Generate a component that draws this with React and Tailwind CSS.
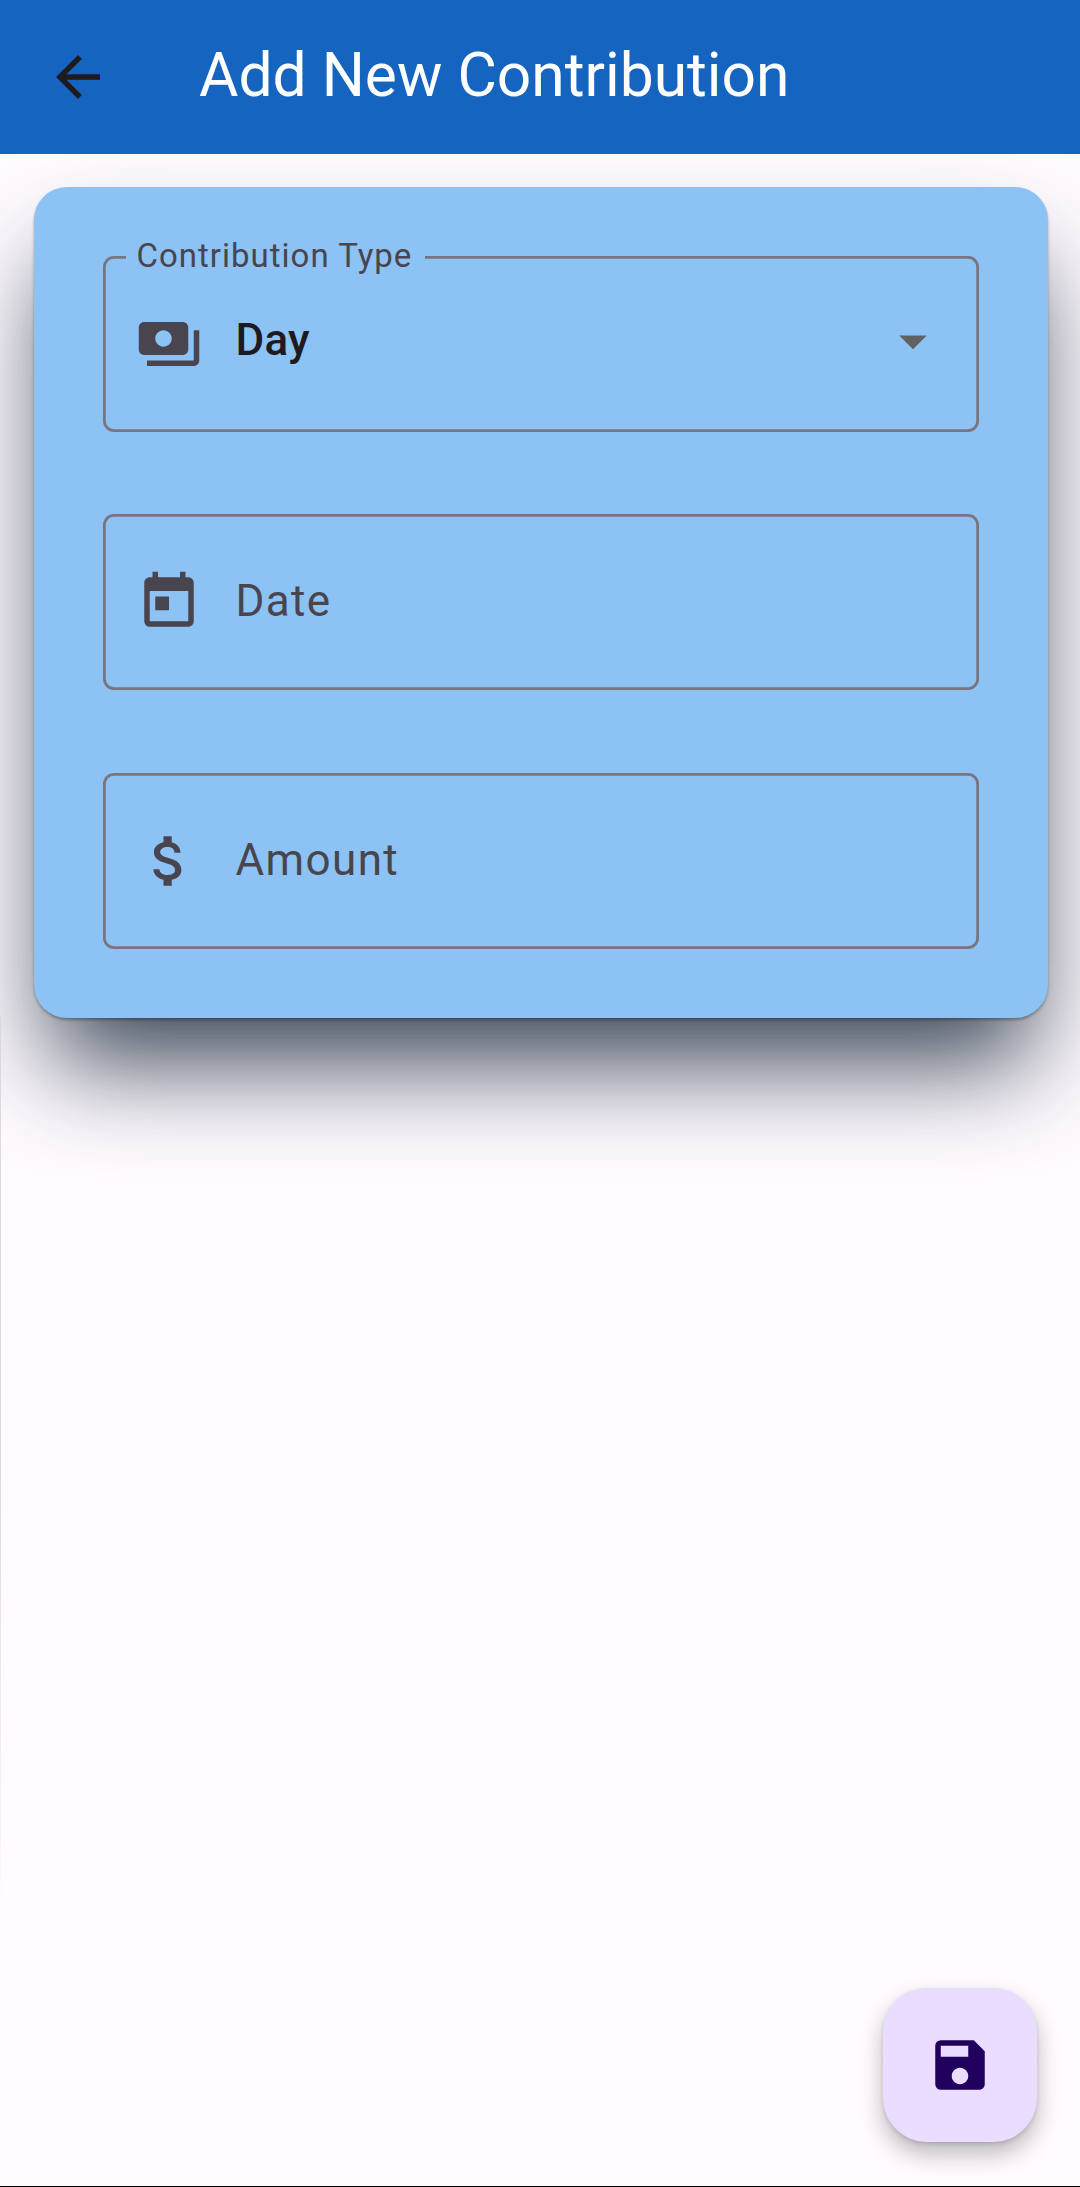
import React from "react";
import {
  MdArrowBack,
  MdPayments,
  MdToday,
  MdAttachMoney,
  MdSave,
  MdArrowDropDown,
} from "react-icons/md";

function Field({ icon: Icon, label, children }) {
  return (
    <div className="relative flex h-[176px] items-center rounded-[11px] pr-[33.5px] pl-[32.75px] shadow-[inset_0_0_0_2.75px_#79747e]">
      {label && (
        <span className="absolute top-[-21px] left-[23.25px] h-[42px] w-[298.5px] bg-[#8dc2f5] pl-[10.5px] text-[33px] leading-[42px] tracking-[1px] whitespace-nowrap text-[#49454f]">
          {label}
        </span>
      )}
      <Icon className="size-[66px] shrink-0 text-[#49454f]" />
      {children}
    </div>
  );
}

export default function App() {
  return (
    <div className="relative flex h-[2187px] w-[1080px] flex-col overflow-hidden border-b border-black bg-[#fffbff] font-['Roboto',sans-serif]">
      <header className="z-10 flex h-[154px] shrink-0 items-center bg-[#1565c0] pl-[45px]">
        <button className="size-[66px]" aria-label="Back">
          <MdArrowBack className="size-[66px] text-[#1d1b20]" />
        </button>
        <h1 className="ml-[88px] pb-[2px] text-[60.5px] leading-[76px] whitespace-nowrap text-white">
          Add New Contribution
        </h1>
      </header>

      <main className="pt-[33px] pr-[32px] pl-[34px]">
        <form className="flex flex-col gap-[82.5px] rounded-[33px] bg-[#8dc2f5] p-[68.75px] shadow-[0_2px_3px_rgba(0,0,0,0.3),0_61px_100px_-16px_rgba(24,40,58,0.86)]">
          <Field icon={MdPayments} label="Contribution Type">
            <div className="flex grow items-center justify-between pb-[6px] pl-[34px]">
              <span className="pb-[2px] text-[44px] leading-[64px] font-medium tracking-[0.2px] text-[#1d1b20]">
                Day
              </span>
              <MdArrowDropDown className="size-[66px] text-[#616161]" />
            </div>
          </Field>
          <Field icon={MdToday}>
            <span className="pb-[3px] pl-[34px] text-[44px] leading-[66px] tracking-[1.375px] text-[#49454f]">
              Date
            </span>
          </Field>
          <Field icon={MdAttachMoney}>
            <span className="pb-[1px] pl-[34px] text-[44px] leading-[66px] tracking-[1.375px] text-[#49454f]">
              Amount
            </span>
          </Field>
        </form>
      </main>

      <div className="absolute top-[1016px] left-0 h-[910px] w-px bg-linear-to-b from-[#dcd8dd] via-[#dcd8dd] to-[#fffbff]" />

      <button
        aria-label="Save"
        className="absolute top-[1988px] left-[883px] flex size-[154px] items-center justify-center rounded-[44px] bg-[#eaddff] shadow-[0_2px_4px_rgba(0,0,0,0.12),0_12px_24px_rgba(0,0,0,0.27)]"
      >
        <MdSave className="size-[66px] text-[#21005d]" />
      </button>
    </div>
  );
}
